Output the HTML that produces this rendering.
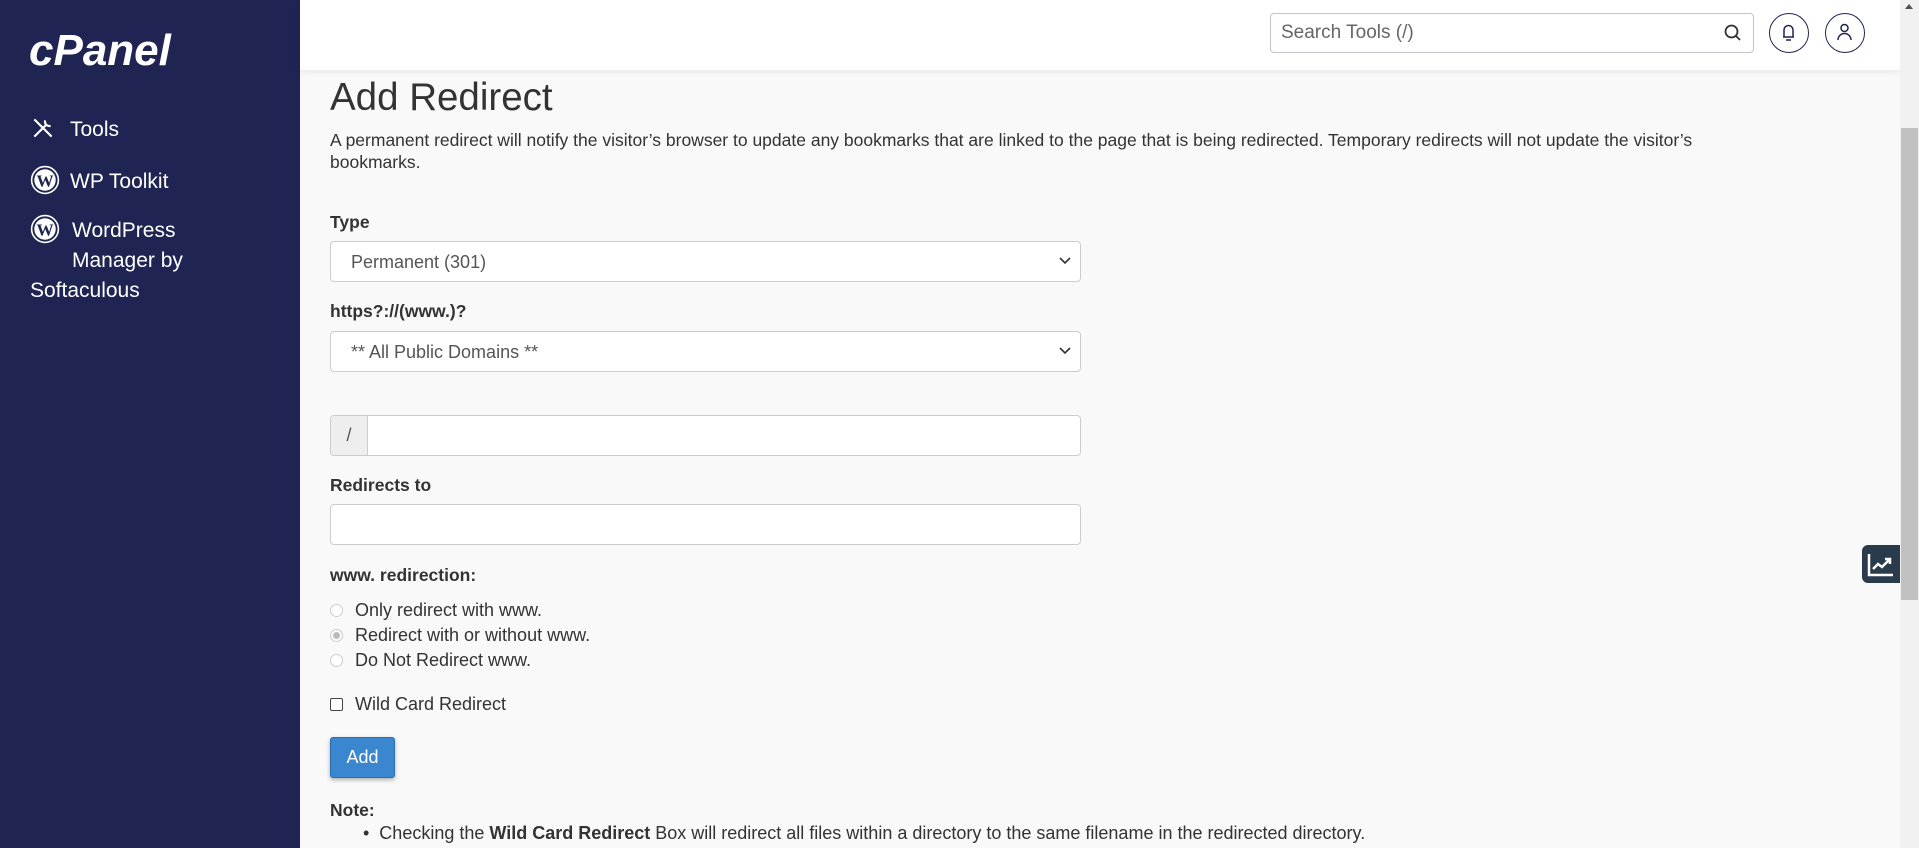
<!DOCTYPE html>
<html><head><meta charset="utf-8"><style>
*{box-sizing:border-box;margin:0;padding:0}
body{width:1919px;height:848px;overflow:hidden;background:#f9f9f9;font-family:"Liberation Sans",sans-serif;color:#333;position:relative}
.side{position:absolute;left:0;top:0;width:300px;height:848px;background:#1f2452;color:#fff}
.logo{position:absolute;left:29px;top:26px;font-size:44px;font-weight:bold;font-style:italic;letter-spacing:0px}
.nav{position:absolute;left:30px;font-size:21px;color:#fff}
.hdr{position:absolute;left:300px;top:0;width:1600px;height:70px;background:#fff;box-shadow:0 2px 6px rgba(0,0,0,.08)}
.search{position:absolute;left:970px;top:13px;width:484px;height:40px;border:1px solid #c3c3d0;border-radius:4px;font-size:19px;color:#666;padding:8px 10px}
.circ{position:absolute;top:13px;width:40px;height:40px;border:1.5px solid #1f2452;border-radius:50%}
.main{position:absolute;left:330px;top:0;width:1560px}
h1{position:absolute;top:76px;font-size:38.5px;font-weight:normal;color:#333}
.desc{position:absolute;top:129px;font-size:17.5px;line-height:22px;width:1500px;color:#333}
.lbl{position:absolute;font-size:17.5px;font-weight:bold;color:#333}
.box{position:absolute;left:0;width:751px;height:41px;background:#fff;border:1px solid #ccc;border-radius:4px;font-size:18px;color:#555;padding:10px 20px}
.chev{position:absolute;right:9px;top:14px}
.rad{position:absolute;left:0;font-size:18px;color:#333}
.rad i{display:inline-block;width:13px;height:13px;border:1px solid #ccc;border-radius:50%;margin-right:12px;vertical-align:-1px;background:#fff}
.btn{position:absolute;left:0;top:737px;width:65px;height:41px;background:#3a87d0;border:1px solid #2b6faf;border-radius:3px;color:#fff;font-size:18px;text-align:center;line-height:39px;box-shadow:0 2px 4px rgba(0,0,0,.3)}
.sb{position:absolute;left:1900px;top:0;width:19px;height:848px;background:#f1f1f1}
.thumb{position:absolute;left:1901px;top:128px;width:17px;height:472px;background:#c1c1c1}
</style></head><body>
<div class="side">
 <div class="logo">cPanel</div>
 <div class="nav" style="top:115px"><svg width="26" height="26" viewBox="0 0 24 24" style="vertical-align:-5px;margin-right:14px" stroke="#fff" stroke-width="2" fill="none"><path d="M4 20L15 9M14 5a4 4 0 0 0 5 5M4 4l16 16"/></svg>Tools</div>
 <div class="nav" style="top:165px"><svg width="30" height="30" viewBox="0 0 28 28" style="vertical-align:-7px;margin-right:10px"><circle cx="14" cy="14" r="12.5" fill="none" stroke="#fff" stroke-width="1.5"/><circle cx="14" cy="14" r="10" fill="#fff"/><text x="14" y="20" font-size="16" font-family="Liberation Serif" font-weight="bold" text-anchor="middle" fill="#1f2452">W</text></svg>WP Toolkit</div>
 <div class="nav" style="top:214px;line-height:30px"><svg width="30" height="30" viewBox="0 0 28 28" style="vertical-align:-7px;margin-right:12px"><circle cx="14" cy="14" r="12.5" fill="none" stroke="#fff" stroke-width="1.5"/><circle cx="14" cy="14" r="10" fill="#fff"/><text x="14" y="20" font-size="16" font-family="Liberation Serif" font-weight="bold" text-anchor="middle" fill="#1f2452">W</text></svg>WordPress<br><span style="padding-left:42px">Manager by</span><br>Softaculous</div>
</div>
<div class="hdr">
 <div class="search">Search Tools (/)<svg width="20" height="20" viewBox="0 0 20 20" style="position:absolute;right:10px;top:9px" fill="none" stroke="#333" stroke-width="1.8"><circle cx="8.5" cy="8.5" r="6"/><path d="M13 13l4 4"/></svg></div>
 <div class="circ" style="left:1469px"><svg width="37" height="37" viewBox="0 0 37 37" fill="none" stroke="#1f2452" stroke-width="1.5"><path d="M13 23h11M14 23v-7a4.5 4.5 0 0 1 9 0v7M16 26h5"/></svg></div>
 <div class="circ" style="left:1525px"><svg width="37" height="37" viewBox="0 0 37 37" fill="none" stroke="#1f2452" stroke-width="1.5"><circle cx="18.5" cy="14" r="3.5"/><path d="M12 26a6.5 6.5 0 0 1 13 0"/></svg></div>
</div>
<div class="main">
 <h1>Add Redirect</h1>
 <div class="desc">A permanent redirect will notify the visitor’s browser to update any bookmarks that are linked to the page that is being redirected. Temporary redirects will not update the visitor’s<br>bookmarks.</div>
 <div class="lbl" style="top:212px">Type</div>
 <div class="box" style="top:241px">Permanent (301)<svg class="chev" width="12" height="10" viewBox="0 0 12 10" fill="none" stroke="#333" stroke-width="1.6"><path d="M1 2l5 5 5-5"/></svg></div>
 <div class="lbl" style="top:301px">https?://(www.)?</div>
 <div class="box" style="top:331px">** All Public Domains **<svg class="chev" width="12" height="10" viewBox="0 0 12 10" fill="none" stroke="#333" stroke-width="1.6"><path d="M1 2l5 5 5-5"/></svg></div>
 <div class="box" style="top:415px;padding:0"><div style="width:37px;height:39px;background:#eee;border-right:1px solid #ccc;border-radius:4px 0 0 4px;text-align:center;line-height:39px;color:#555">/</div></div>
 <div class="lbl" style="top:475px">Redirects to</div>
 <div class="box" style="top:504px"></div>
 <div class="lbl" style="top:565px">www. redirection:</div>
 <div class="rad" style="top:600px"><i></i>Only redirect with www.</div>
 <div class="rad" style="top:625px"><i style="background:radial-gradient(circle,#bbb 3px,#fff 4px)"></i>Redirect with or without www.</div>
 <div class="rad" style="top:650px"><i></i>Do Not Redirect www.</div>
 <div class="rad" style="top:694px"><i style="border-radius:2px;border-color:#444"></i>Wild Card Redirect</div>
 <div class="btn">Add</div>
 <div class="lbl" style="top:800px">Note:</div>
 <div class="rad" style="top:823px;left:33px">•&nbsp;&nbsp;Checking the <b>Wild Card Redirect</b> Box will redirect all files within a directory to the same filename in the redirected directory.</div>
</div>
<div style="position:absolute;left:1862px;top:545px;width:38px;height:38px;background:#2a3b4c;border-radius:6px 0 0 6px"><svg width="38" height="38" viewBox="0 0 38 38" fill="none" stroke="#fff" stroke-width="2.5"><path d="M7 9v21h24M11 24l5-5 4 3 7-7M23 14h5v5"/></svg></div>
<div class="sb"></div><div class="thumb"></div>
<div style="position:absolute;left:1905px;top:4px;border:4px solid transparent;border-bottom:5px solid #505050;border-top:0"></div>
</body></html>
